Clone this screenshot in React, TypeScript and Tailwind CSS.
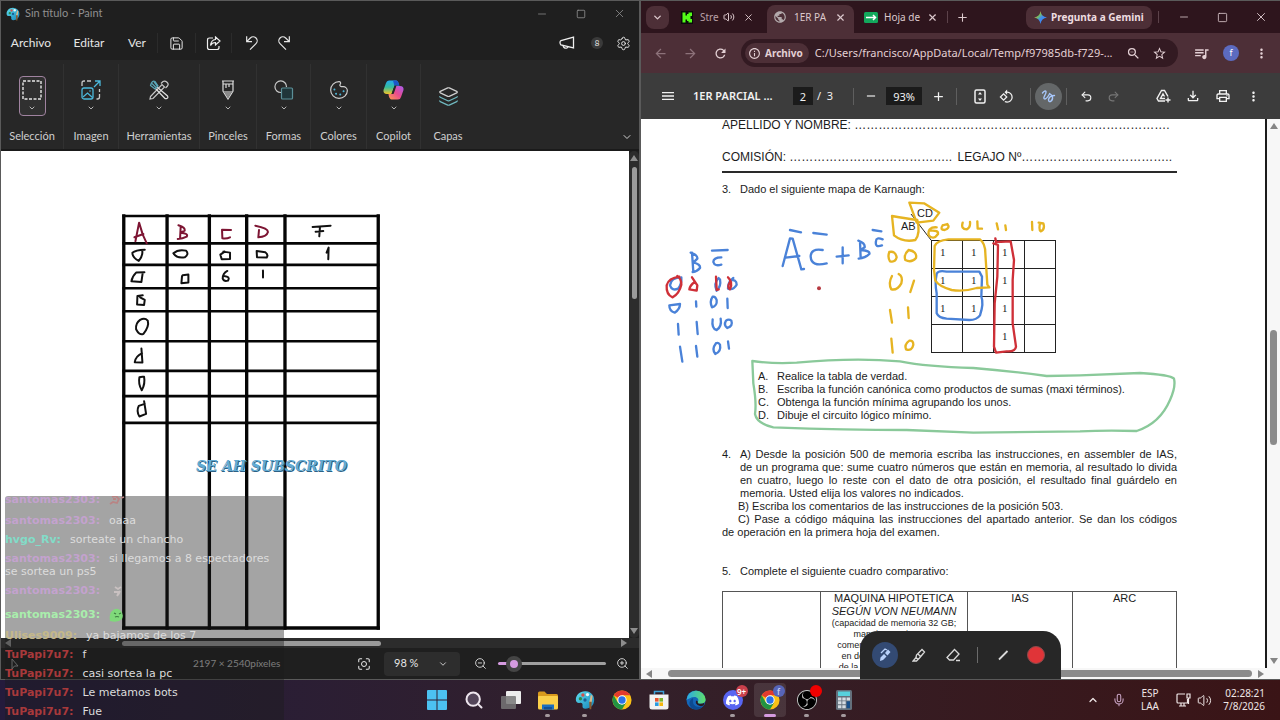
import type { ReactNode } from "react";
import {
  ChevronDown,
  ChevronUp,
  Layers,
  Maximize,
  Mic,
  Minus,
  Palette,
  Plus,
  Redo2,
  Save,
  Search,
  Settings,
  Square,
  Undo2,
  Volume2,
  X,
  ZoomIn,
  ZoomOut,
} from "lucide-react";
import {
  MdAdd,
  MdArrowBack,
  MdArrowForward,
  MdInfoOutline,
  MdMenu,
  MdMoreVert,
  MdOutlineFileDownload,
  MdOutlinePrint,
  MdOutlineRotate90DegreesCcw,
  MdPublic,
  MdQueueMusic,
  MdRefresh,
  MdRemove,
  MdStarBorder,
  MdZoomOut,
} from "react-icons/md";
import { SiDiscord, SiObsstudio } from "react-icons/si";

const UI = "font-['Noto_Sans','Open_Sans',sans-serif]";

type IconButtonProps = { label: string; className?: string; children?: ReactNode };

function IconButton({ label, className = "", children }: IconButtonProps) {
  return (
    <button aria-label={label} className={`flex shrink-0 items-center justify-center ${className}`}>
      {children}
    </button>
  );
}

/* ---------- Paint: small drawings ---------- */

function PaintLogo({ size }: { size: number }) {
  return (
    <svg width={size} height={size} viewBox="0 0 24 24" className="shrink-0" aria-hidden>
      <defs>
        <linearGradient id="paintBody" x1="0" y1="0" x2="1" y2="1">
          <stop offset="0" stopColor="#5fe0f0" />
          <stop offset="1" stopColor="#1583b8" />
        </linearGradient>
      </defs>
      <path
        d="M13 1.500C6 1 1 6 1 11.500c0 3 2 4.500 4.500 4 2.500-.5 4 .5 3.500 3-.4 2.500 1 4 3.500 4C18.500 22.500 23 18 23 12S19 2 13 1.500z"
        fill="url(#paintBody)"
      />
      <circle cx="6.500" cy="10.500" r="2" fill="#2a8a4a" />
      <circle cx="9.500" cy="6" r="2" fill="#d2504a" />
      <circle cx="15" cy="5.500" r="2" fill="#eef7f9" />
      <circle cx="12" cy="12" r="2" fill="#1d5f95" />
      <path d="M19 6l2 1-1 8h-3z" fill="#d9b98c" />
      <path d="M17 14h3l-.5 9h-2z" fill="#8a5a2c" />
    </svg>
  );
}

function SelectionIcon() {
  return (
    <svg width="20" height="20" viewBox="0 0 20 20" fill="none" stroke="#e8e8e8" strokeWidth="1.400" aria-hidden>
      <rect x="1" y="1" width="18" height="18" strokeDasharray="3 1.500" />
    </svg>
  );
}

function ImageIcon() {
  return (
    <svg width="20" height="20" viewBox="0 0 20 20" fill="none" strokeWidth="1.300" aria-hidden>
      <path d="M1 6V3q0-2 2-2h1M6 1h4M18.500 9v3M18.500 14v3q0 2-2 2h-1" stroke="#c9c9c9" />
      <path d="M13 7l6-6M14 1h5v5" stroke="#4cb9dc" />
      <rect x="1" y="8" width="11" height="11" rx="2" stroke="#4cb9dc" />
      <path d="M2 17l4.500-4 5 4.500" stroke="#4cb9dc" />
      <circle cx="9" cy="11" r=".8" fill="#4cb9dc" />
    </svg>
  );
}

function ToolsIcon() {
  return (
    <svg width="20" height="20" viewBox="0 0 20 20" fill="none" strokeWidth="1.200" aria-hidden>
      <path d="M1.500 16.500L13 4.500l2.500 2.500L4 18.500l-3 .5z" stroke="#c9c9c9" />
      <path d="M12 3.500l2-2q2-1 4 .8t.5 3.700l-2 2" stroke="#c9c9c9" />
      <path d="M8 7l10.500 9q1 2-.6 2.500-1.400.6-2.400-.5L6.500 8.500" stroke="#e0e0e0" />
      <path d="M1.500 5.500l4.500 3.500 3-3L6 1.500q-3-1.500-4.500 4zM3 3.500l4 4M5 2l3 4" stroke="#5aa6b8" />
    </svg>
  );
}

function BrushIcon() {
  return (
    <svg width="14" height="20" viewBox="0 0 14 20" fill="none" stroke="#dcdcdc" strokeWidth="1.200" aria-hidden>
      <path d="M1 1h12M2 4h10M2 1v10l5 8 5-8V1" />
      <path d="M5 4v4M8 4v3" />
      <path d="M2.500 11h9L7 18.500z" fill="#8b8b8b" stroke="none" />
    </svg>
  );
}

function ShapesIcon() {
  return (
    <svg width="20" height="20" viewBox="0 0 20 20" fill="none" strokeWidth="1.200" aria-hidden>
      <path d="M7 12.500A5.800 5.800 0 1 1 12.500 7" stroke="#c9c9c9" />
      <rect x="7.500" y="8" width="11" height="11" rx="1" fill="#20363a" stroke="#5b8f98" />
    </svg>
  );
}

function PaletteIcon() {
  return (
    <span className="relative flex">
      <Palette size={20} strokeWidth={1.4} className="-scale-x-100 rotate-180 [&_circle]:stroke-[#4cb9dc]" />
    </span>
  );
}

function LayersIcon() {
  return <Layers size={21} strokeWidth={1.4} className="[&_path:not(:first-child)]:stroke-[#6fb9c0]" />;
}

function CopilotIcon() {
  return (
    <svg width="21" height="20" viewBox="0 0 21 20" aria-hidden>
      <defs>
        <linearGradient id="copLeft" x1="0" y1="0" x2="0" y2="1">
          <stop offset="0" stopColor="#25a7ee" />
          <stop offset=".5" stopColor="#35bd9b" />
          <stop offset="1" stopColor="#f4c327" />
        </linearGradient>
        <linearGradient id="copRight" x1="1" y1="0" x2="0" y2="1">
          <stop offset="0" stopColor="#a65cf0" />
          <stop offset=".5" stopColor="#ea4b8f" />
          <stop offset="1" stopColor="#ff9a4d" />
        </linearGradient>
      </defs>
      <path d="M6 .5h7q2 0 3 4l.4 1h-3q-2 0-3 3L8.500 14H4q-4 0-3.500-4L3 3Q3.700.5 6 .5z" fill="url(#copLeft)" />
      <path d="M10 .5h3q2 0 3 4l.4 1h-3q-1.200 0-1.800 1z" fill="#1b56c8" />
      <path d="M15 19.500H8.500q-2-.3-2.800-4L5.500 14h3q1.500 0 2-2L12.500 6H17q4 0 3.500 4L18 17q-.7 2.500-3 2.500z" fill="url(#copRight)" />
      <path d="M9.500 11.500l2-6h2l-2 6-1 2.500h-2z" fill="#272727" />
    </svg>
  );
}

function HookArrow({ flip = false }: { flip?: boolean }) {
  return (
    <svg
      width="16"
      height="16"
      viewBox="0 0 24 24"
      fill="none"
      stroke="currentColor"
      strokeWidth="1.800"
      className={flip ? "-scale-x-100" : ""}
      aria-hidden
    >
      <path d="M4 2v8h8M4 10l5.500-5.500a6 6 0 0 1 8.500 8.500L9 22" />
    </svg>
  );
}

function Megaphone() {
  return (
    <svg width="16" height="14" viewBox="0 0 16 14" fill="none" stroke="#eee" strokeWidth="1.300" aria-hidden>
      <path d="M14.500 1v11L2 9q-1-1-1-2.500T2 4.500z" />
      <path d="M4 9.500q1 3.500 4 2.500.8-.4 1-1.500" />
    </svg>
  );
}

const RIBBON = [
  { label: "Selección", width: "w-[63px]", icon: <SelectionIcon />, selected: true },
  { label: "Imagen", width: "w-[55px]", icon: <ImageIcon /> },
  { label: "Herramientas", width: "w-[81px]", icon: <ToolsIcon /> },
  { label: "Pinceles", width: "w-[57px]", icon: <BrushIcon /> },
  { label: "Formas", width: "w-[54px]", icon: <ShapesIcon /> },
  { label: "Colores", width: "w-[56px]", icon: <PaletteIcon /> },
  { label: "Copilot", width: "w-[54px]", icon: <CopilotIcon /> },
  { label: "Capas", width: "w-[54px]", icon: <LayersIcon />, plain: true },
];

// grid lines and pen strokes of the truth table, three units per pixel
const TABLE_COLUMNS = [41, 171, 298, 410, 525, 805];
const TABLE_ROWS = [48, 130, 195, 265, 334, 424, 513, 589, 669];
const RED_STROKES = [
  "M76 124L87 68L98 104L110 130M73 112L100 102",
  "M205 76Q226 82 224 92L211 98Q236 100 230 110Q218 116 203 117M212 78L210 116",
  "M363 90L336 89L337 115Q350 117 360 112",
  "M436 77Q474 84 474 96Q470 110 445 112L447 90",
];
const BLACK_STROKES = [
  "M608 81L662 77M630 82L628 109M617 95L640 93",
  "M104 149Q76 150 67 158Q66 172 86 183Q100 166 96 150",
  "M190 160Q204 147 228 152Q238 163 224 172Q200 176 190 160",
  "M340 155L360 158L360 177L335 178L331 164L344 155",
  "M440 154L441 172L470 173Q476 164 466 157L440 153",
  "M650 158L656 143L655 178",
  "M103 217L78 218Q66 230 64 244L94 246L98 218",
  "M218 226L235 224L235 248L214 250L216 228",
  "M352 213Q338 220 338 236Q342 246 354 242Q362 230 342 228",
  "M459 212L459 233",
  "M98 286L82 288L81 314L102 315L104 300L90 292",
  "M90 360Q76 370 78 388Q88 408 100 402Q118 380 113 362Q104 352 90 360",
  "M94 446L97 488L74 487Q76 470 96 460",
  "M88 532Q84 552 95 571Q106 552 102 531Q94 530 88 532",
  "M102 604L108 642L88 650Q78 634 86 618L104 612",
];

function TruthTable() {
  return (
    <svg
      viewBox="0 0 870 1300"
      className="absolute left-[109px] top-[49px] h-[433px] w-[290px]"
      fill="none"
      strokeLinecap="round"
      strokeLinejoin="round"
      role="img"
      aria-label="Tabla de verdad A B C D F"
    >
      <g stroke="#050505" strokeWidth="10" strokeLinecap="square">
        {TABLE_COLUMNS.map((x) => (
          <path key={x} d={`M${x} 48V1285`} />
        ))}
        {TABLE_ROWS.map((y) => (
          <path key={y} d={`M41 ${y}H805`} strokeWidth="8" />
        ))}
        <path d="M41 1285H805" />
      </g>
      <g stroke="#7d1533" strokeWidth="6">
        {RED_STROKES.map((d) => (
          <path key={d} d={d} />
        ))}
      </g>
      <g stroke="#111" strokeWidth="6">
        {BLACK_STROKES.map((d) => (
          <path key={d} d={d} />
        ))}
      </g>
    </svg>
  );
}

function PaintWindow() {
  return (
    <section className="flex min-h-0 min-w-0 flex-col border border-[#5a5a5a] bg-[#1f1f1f] font-[Lato,'Noto_Sans',sans-serif] text-[#e6e6e6]">
      <header className="flex h-[25px] shrink-0 items-center pl-[5px] text-[#8f8f8f]">
        <PaintLogo size={14} />
        <h1 className="ml-[5px] mr-auto text-[11px]">Sin título - Paint</h1>
        <IconButton label="Minimizar" className="w-[39px]">
          <Minus size={12} strokeWidth={1.5} />
        </IconButton>
        <IconButton label="Maximizar" className="w-[39px]">
          <Square size={10} strokeWidth={2} />
        </IconButton>
        <IconButton label="Cerrar" className="w-[39px]">
          <X size={13} strokeWidth={1.5} />
        </IconButton>
      </header>

      <nav className="flex h-[34px] shrink-0 items-center text-xs">
        <button className="w-15">Archivo</button>
        <button className="w-14">Editar</button>
        <button className="w-10">Ver</button>
        <IconButton label="Guardar" className="h-5 w-[39px] border-x border-[#2b2b2b]">
          <Save size={15} strokeWidth={1.6} />
        </IconButton>
        <IconButton label="Compartir" className="h-5 w-9 border-r border-[#2b2b2b]">
          <svg width="15" height="15" viewBox="0 0 15 15" fill="none" stroke="#eee" strokeWidth="1.200" aria-hidden>
            <path d="M7 2H3.500Q1.500 2 1.500 4v7.500q0 2 2 2H11q2 0 2-2V10" />
            <path d="M9.500 1l4.500 4-4.500 4V6.500Q6 6.500 4.500 9.500 5 4 9.500 3.500z" />
          </svg>
        </IconButton>
        <IconButton label="Deshacer" className="w-10">
          <HookArrow />
        </IconButton>
        <IconButton label="Rehacer" className="w-6">
          <HookArrow flip />
        </IconButton>
        <IconButton label="Comentarios" className="ml-auto w-8">
          <Megaphone />
        </IconButton>
        <IconButton label="Cuenta" className="w-7">
          <span className="flex h-3 w-3 items-center justify-center rounded-full bg-[#3a3a3a] text-[8px]">8</span>
        </IconButton>
        <IconButton label="Configuración" className="mr-1 w-6">
          <Settings size={15} strokeWidth={1.6} />
        </IconButton>
      </nav>

      <div className="flex h-[91px] shrink-0 border-b-2 border-[#1a1a1a] bg-[#272727] pt-1 text-[11px] text-[#cfcfcf]">
        {RIBBON.map(({ label, width, icon, selected, plain }) => (
          <button
            key={label}
            className={`${width} flex shrink-0 flex-col items-center ${plain ? "" : "border-r border-[#313131]"}`}
          >
            <span
              className={`mt-3 flex h-10 w-[27px] flex-col items-center justify-center gap-1 rounded ${
                selected ? "border border-[#a083a0] bg-[#303030]" : ""
              }`}
            >
              {icon}
              {!plain && <ChevronDown size={8} strokeWidth={2.5} className="shrink-0" />}
            </span>
            <span className="mt-auto pb-[5px]">{label}</span>
          </button>
        ))}
        <IconButton label="Más opciones" className="ml-auto w-6 items-end pb-[6px]">
          <ChevronDown size={12} />
        </IconButton>
      </div>

      <div className="flex min-h-0 flex-1">
        <div className="relative min-w-0 flex-1 overflow-hidden bg-white">
          <TruthTable />
          <p
            className="absolute left-[195px] top-[305px] whitespace-nowrap font-['DejaVu_Serif',serif] text-sm font-bold italic text-[#62abd3]"
            style={{ textShadow: "1px 1px 0 #2c6185" }}
          >
            SE AH SUBSCRITO
          </p>
        </div>
        <div className="flex w-[10px] flex-col items-center rounded-full bg-[#2c2c2c] py-1">
          <span className="h-0 w-0 border-x-4 border-b-6 border-x-transparent border-b-[#8e8e8e]" />
          <span className="mt-[6px] h-[132px] w-[5px] rounded-full bg-[#9a9a9a]" />
          <span className="mt-auto h-0 w-0 border-x-4 border-t-6 border-x-transparent border-t-[#8e8e8e]" />
        </div>
      </div>
      <div className="flex h-[10px] shrink-0 items-center bg-[#2c2c2c] px-1">
        <span className="h-0 w-0 border-y-4 border-r-6 border-y-transparent border-r-[#8e8e8e]" />
        <span className="ml-[111px] h-[5px] w-[259px] rounded-full bg-[#9a9a9a]" />
        <span className="ml-auto mr-2 h-0 w-0 border-y-4 border-l-6 border-y-transparent border-l-[#8e8e8e]" />
      </div>

      <footer className="flex h-[31px] shrink-0 items-center text-[11px]">
        <svg width="24" height="14" viewBox="0 0 24 14" fill="none" stroke="#999" className="shrink-0" aria-hidden>
          <path d="M11 2v10l2.500-3H17z" />
        </svg>
        <span className="ml-[168px] w-[86px] whitespace-nowrap text-[10px] text-[#bdbdbd]">2197 × 2540píxeles</span>
        <IconButton label="Ajustar a la ventana" className="ml-[77px] w-4">
          <span className="relative flex items-center justify-center">
            <Maximize size={14} strokeWidth={1.8} />
            <span className="absolute h-[6px] w-[6px] rounded-full border border-[#e6e6e6]" />
          </span>
        </IconButton>
        <span className="relative ml-3 flex items-center">
          <select
            aria-label="Nivel de zoom"
            className="h-6 w-19 appearance-none rounded bg-[#2d2d2d] pl-[10px] text-[11px] text-[#e6e6e6]"
          >
            <option>98 %</option>
          </select>
          <ChevronDown size={10} className="pointer-events-none absolute right-3" />
        </span>
        <IconButton label="Alejar" className="ml-3 w-4">
          <ZoomOut size={13} strokeWidth={1.6} />
        </IconButton>
        <input
          type="range"
          aria-label="Zoom"
          min={0}
          max={100}
          defaultValue={9}
          className="ml-[10px] h-[3px] w-[108px] appearance-none rounded-full bg-linear-to-r from-[#d59be0] from-10% to-[#a0a0a0] to-10% [&::-webkit-slider-thumb]:h-4 [&::-webkit-slider-thumb]:w-4 [&::-webkit-slider-thumb]:appearance-none [&::-webkit-slider-thumb]:rounded-full [&::-webkit-slider-thumb]:border-4 [&::-webkit-slider-thumb]:border-[#454545] [&::-webkit-slider-thumb]:bg-[#d59be0]"
        />
        <IconButton label="Acercar" className="ml-2 w-4">
          <ZoomIn size={13} strokeWidth={1.6} />
        </IconButton>
      </footer>
    </section>
  );
}

/* ---------- Chat overlay ---------- */

type Message = { user: string; color: string; text?: string; more?: string; emote?: string; gap: string };

const CHAT: Message[] = [
  { user: "santomas2303:", color: "text-[#c3a2ce]", emote: "pink", gap: "-mt-[3px]" },
  { user: "santomas2303:", color: "text-[#c3a2ce]", text: "oaaa", gap: "mt-2" },
  { user: "hvgo_Rv:", color: "text-[#82dcc8]", text: "sorteate un chancho", gap: "mt-[6px]" },
  {
    user: "santomas2303:",
    color: "text-[#c3a2ce]",
    text: "si llegamos a 8 espectadores",
    more: "se sortea un ps5",
    gap: "mt-[6px]",
  },
  { user: "santomas2303:", color: "text-[#c3a2ce]", emote: "grey", gap: "mt-[6px]" },
  { user: "santomas2303:", color: "text-[#a9eeac]", emote: "green", gap: "mt-[11px]" },
  { user: "Ulises9009:", color: "text-[#c4b88a]", text: "ya bajamos de los 7", gap: "mt-2" },
  { user: "TuPapi7u7:", color: "text-[#a8393b]", text: "f", gap: "mt-[6px]" },
  { user: "TuPapi7u7:", color: "text-[#a8393b]", text: "casi sortea la pc", gap: "mt-[6px]" },
  { user: "TuPapi7u7:", color: "text-[#a8393b]", text: "Le metamos bots", gap: "mt-[6px]" },
  { user: "TuPapi7u7:", color: "text-[#a8393b]", text: "Fue", gap: "mt-[6px]" },
];

function Emote({ kind }: { kind: string }) {
  if (kind === "green") {
    return (
      <svg width="14" height="14" viewBox="0 0 14 14" aria-hidden>
        <path d="M2 4Q7-2 12 3q3 4 1 8-4 4-12 2Q0 8 2 4z" fill="#7fd97a" />
        <path d="M5 5l2 1M12 5l-2 1M6 9q2-1 4 0" stroke="#3d7b40" strokeWidth="1.200" fill="none" />
      </svg>
    );
  }
  return (
    <svg width="16" height="13" viewBox="0 0 16 13" aria-hidden>
      <path
        d={kind === "pink" ? "M1 11l3-2 4 1 2-4-3-3-4 1M4 6h3M12 5l3-1" : "M6 3l3 2 3-2M5 8h5l-2 4M11 7l-2 4"}
        stroke={kind === "pink" ? "#b98484" : "#c9c1c1"}
        strokeWidth="1.800"
        fill="none"
      />
    </svg>
  );
}

function ChatOverlay() {
  return (
    <aside className="pointer-events-none absolute bottom-0 left-[5px] z-20 h-56 w-[279px] overflow-hidden rounded-t-[3px] bg-[#1c1c1c]/40 font-['DejaVu_Sans',sans-serif] text-[11px] leading-[13px] text-[#dcdcdc]">
      {CHAT.map(({ user, color, text, more, emote, gap }, i) => (
        <div key={i} className={`${gap} whitespace-nowrap`}>
          <div className="flex h-[13px] items-center gap-[9px]">
            <b className={color}>{user}</b>
            {text}
            {emote && <Emote kind={emote} />}
          </div>
          {more && <p>{more}</p>}
        </div>
      ))}
    </aside>
  );
}

/* ---------- Browser ---------- */

function KickIcon() {
  return (
    <svg width="12" height="13" viewBox="0 0 12 13" className="shrink-0" aria-hidden>
      <rect width="12" height="13" fill="#0b0b0b" />
      <path d="M1.500 1.500h3v3h1.500v-1.500h1.500v-1.500h3.500v3.500H9.500v3H11v3.500H7.500V10H6V8.500H4.500v3h-3z" fill="#53fc18" />
    </svg>
  );
}

function SheetIcon() {
  return (
    <svg width="14" height="11" viewBox="0 0 14 11" className="shrink-0" aria-hidden>
      <rect width="14" height="11" rx="1.500" fill="#12a85c" />
      <path d="M2 5.500h10M9 3l2.500 2.500L9 8" stroke="#fff" strokeWidth="1.500" fill="none" />
    </svg>
  );
}

function GeminiSpark() {
  return (
    <svg width="13" height="13" viewBox="0 0 24 24" aria-hidden>
      <defs>
        <linearGradient id="gem" x1="0" y1="0" x2="1" y2="1">
          <stop offset=".2" stopColor="#e8564a" />
          <stop offset=".35" stopColor="#7ac05a" />
          <stop offset=".55" stopColor="#3f8cf0" />
          <stop offset="1" stopColor="#3f7bf0" />
        </linearGradient>
      </defs>
      <path d="M12 0q1.500 10.500 12 12-10.500 1.500-12 12Q10.500 13.500 0 12 10.500 10.500 12 0z" fill="url(#gem)" />
    </svg>
  );
}

function SquiggleIcon() {
  return (
    <svg
      width="15"
      height="15"
      viewBox="0 0 15 15"
      fill="none"
      stroke="currentColor"
      strokeWidth="1.400"
      strokeLinecap="round"
      aria-hidden
    >
      <path d="M1.500 4Q4 1 5 2.500 5.500 4 3.500 7 2 10 4 10 5.500 10 8.500 5M13.500 6.500Q8.500 6.500 7.500 10.500 7.500 13 9.500 12.500 12 11 11.500 8 11 6 8.500 4.500" />
    </svg>
  );
}

function TabStrip() {
  return (
    <div className="flex h-8 shrink-0 items-center bg-[#2e151d] pl-[5px] text-[10px] text-[#dcc9cd]">
      <IconButton label="Buscar pestañas" className="h-[23px] w-[23px] rounded-lg bg-[#4d2f37]">
        <ChevronDown size={11} strokeWidth={3} />
      </IconButton>
      <div className="flex w-[98px] items-center pl-3">
        <KickIcon />
        <span className="ml-[7px] w-[19px] whitespace-nowrap text-[#b9a1a7]">Stre</span>
        <Volume2 size={12} className="ml-1 shrink-0" />
        <IconButton label="Cerrar pestaña" className="ml-[7px] w-3">
          <X size={11} />
        </IconButton>
      </div>
      <div className="flex h-[28px] w-[87px] items-center self-end rounded-t-lg bg-[#4d2f37] pb-1 pl-[6px]">
        <MdPublic size={14} className="shrink-0 text-[#b3aaac]" />
        <span className="ml-[7px] w-8 whitespace-nowrap">1ER PA</span>
        <IconButton label="Cerrar pestaña" className="ml-[6px] w-4">
          <X size={11} strokeWidth={2.5} />
        </IconButton>
      </div>
      <div className="flex items-center pl-[10px]">
        <SheetIcon />
        <span className="ml-[6px] w-9 whitespace-nowrap">Hoja de</span>
        <IconButton label="Cerrar pestaña" className="ml-[6px] w-3">
          <X size={11} strokeWidth={2.5} />
        </IconButton>
      </div>
      <span className="ml-[9px] h-3 w-px bg-[#5c424a]" />
      <IconButton label="Nueva pestaña" className="ml-[6px] w-4">
        <Plus size={13} />
      </IconButton>
      <button className="ml-auto flex h-[23px] w-[126px] items-center gap-1 whitespace-nowrap rounded-lg bg-[#4d2f37] pl-2 font-bold text-[#eedde0]">
        <GeminiSpark />
        Pregunta a Gemini
      </button>
      <span className="ml-[6px] h-3 w-px bg-[#5c424a]" />
      <IconButton label="Minimizar" className="ml-[6px] w-[38px]">
        <Minus size={12} strokeWidth={1.6} />
      </IconButton>
      <IconButton label="Maximizar" className="w-[38px]">
        <Square size={11} strokeWidth={1.8} />
      </IconButton>
      <IconButton label="Cerrar" className="w-[39px]">
        <X size={14} strokeWidth={1.6} />
      </IconButton>
    </div>
  );
}

function AddressBar() {
  return (
    <div className="flex h-10 shrink-0 items-center bg-[#4d2f37] text-[#e3d0d4]">
      <IconButton label="Atrás" className="ml-1 w-[30px] text-[#8d727a]">
        <MdArrowBack size={15} />
      </IconButton>
      <IconButton label="Adelante" className="w-[30px] text-[#8d727a]">
        <MdArrowForward size={15} />
      </IconButton>
      <IconButton label="Volver a cargar" className="w-[30px]">
        <MdRefresh size={15} />
      </IconButton>
      <div className="ml-[6px] flex h-7 min-w-0 flex-1 items-center rounded-full bg-[#331a22] pl-1 pr-[6px]">
        <button className="flex h-5 shrink-0 items-center gap-1 rounded-full bg-[#4d2f37] pl-[3px] pr-[6px] text-[10px] font-bold">
          <MdInfoOutline size={13} />
          Archivo
        </button>
        <input
          aria-label="Dirección"
          readOnly
          defaultValue="C:/Users/francisco/AppData/Local/Temp/f97985db-f729-..."
          className="ml-[6px] min-w-0 flex-1 bg-transparent text-[11px] outline-none"
        />
        <IconButton label="Zoom" className="w-[26px]">
          <MdZoomOut size={15} />
        </IconButton>
        <IconButton label="Favorito" className="w-[26px]">
          <MdStarBorder size={15} />
        </IconButton>
      </div>
      <IconButton label="Medios" className="ml-2 w-[30px]">
        <MdQueueMusic size={17} />
      </IconButton>
      <IconButton label="Perfil" className="w-[30px]">
        <span className="flex h-4 w-4 items-center justify-center rounded-full bg-[#5c6bc0] text-[9px] text-white">f</span>
      </IconButton>
      <IconButton label="Menú" className="mr-1 w-[30px]">
        <MdMoreVert size={15} />
      </IconButton>
    </div>
  );
}

function Divider() {
  return <span className="h-[17px] w-px shrink-0 bg-[#5f5f5f]" />;
}

function PdfToolbar() {
  return (
    <div className="flex h-[46px] shrink-0 items-center bg-[#3c3c3c] text-[11px] text-[#f1f1f1]">
      <IconButton label="Menú" className="ml-3 w-[30px]">
        <MdMenu size={16} />
      </IconButton>
      <h2 className="ml-[10px] w-[92px] whitespace-nowrap font-semibold">1ER PARCIAL ...</h2>
      <input aria-label="Página" defaultValue="2" className="ml-2 h-[18px] w-5 bg-[#1b1b1b] text-center" />
      <span className="ml-1 w-9 whitespace-pre">/  3</span>
      <Divider />
      <IconButton label="Alejar" className="ml-[2px] w-[30px]">
        <MdRemove size={14} />
      </IconButton>
      <input aria-label="Zoom" defaultValue="93%" className="h-[18px] w-9 bg-[#1b1b1b] text-center" />
      <IconButton label="Acercar" className="mr-[2px] w-8">
        <MdAdd size={15} />
      </IconButton>
      <Divider />
      <IconButton label="Ajustar a la página" className="ml-[10px] w-[26px]">
        <svg width="12" height="15" viewBox="0 0 12 15" fill="none" stroke="currentColor" aria-hidden>
          <rect x="1" y="1" width="10" height="13" rx="1.500" strokeWidth="1.500" />
          <path d="M6 3l2 2.500H4zM6 12l2-2.500H4z" fill="currentColor" stroke="none" />
        </svg>
      </IconButton>
      <IconButton label="Girar" className="mr-[11px] w-[26px]">
        <MdOutlineRotate90DegreesCcw size={15} />
      </IconButton>
      <Divider />
      <IconButton label="Dibujar" className="mx-1 h-[27px] w-[27px] rounded-full bg-[#646768] text-[#a8c7fa]">
        <SquiggleIcon />
      </IconButton>
      <Divider />
      <IconButton label="Deshacer" className="ml-[6px] w-[27px]">
        <Undo2 size={13} />
      </IconButton>
      <IconButton label="Rehacer" className="w-[27px] text-[#757575]">
        <Redo2 size={13} />
      </IconButton>
      <IconButton label="Guardar en Drive" className="ml-auto w-[30px]">
        <svg width="15" height="14" viewBox="0 0 15 14" fill="none" stroke="currentColor" strokeWidth="1.400" aria-hidden>
          <path d="M9 12H2.500L1 9.500 5.500 1.500h3l3.500 6" />
          <path d="M9 9.500H4.500L7 5l1.500 2.500M12 8.500v5M9.500 11h5" />
        </svg>
      </IconButton>
      <IconButton label="Descargar" className="w-[30px]">
        <MdOutlineFileDownload size={16} />
      </IconButton>
      <IconButton label="Imprimir" className="w-[30px]">
        <MdOutlinePrint size={16} />
      </IconButton>
      <IconButton label="Más" className="mr-3 w-[30px]">
        <MdMoreVert size={15} />
      </IconButton>
    </div>
  );
}

// pen strokes over the exam page, three units per pixel
const INK = [
  {
    color: "#4a82d8",
    width: 7,
    paths: [
      "M428 288L450 205L458 206L484 298L492 297M437 263L478 258M450 180L483 187",
      "M548 240Q512 234 512 260Q514 292 560 280M520 189L560 194",
      "M608 232L608 280M590 260L626 256",
      "M655 212Q676 220 674 232L662 240Q692 242 688 252Q676 264 656 266M660 214L662 264M698 180L724 184M728 208Q708 200 708 214Q704 234 726 226",
      "M156 248L160 306M152 248Q174 256 172 266L160 278Q182 282 180 294Q172 304 158 306",
      "M216 242L263 240M244 262Q220 262 220 276Q224 290 244 284",
      "M124 322Q92 322 90 346Q96 364 114 356Q126 342 124 322",
      "M88 406L120 402Q120 418 104 428Q88 424 88 406M168 394L169 410M218 380Q208 394 216 412Q232 408 230 390Q226 378 218 380M262 386L263 414",
      "M114 462L116 494M170 456L173 492M218 448Q214 476 230 480Q246 470 242 446M258 452Q250 466 262 474Q280 468 274 452Q266 446 258 452",
      "M120 530L127 575M168 528L172 560M228 520Q214 538 226 552Q244 544 240 524Q234 516 228 520M264 514L267 536",
      "M280 324Q262 338 264 356Q280 362 290 344Q290 326 270 332M236 324Q220 340 230 362Q244 350 240 328",
      "M890 312Q894 300 920 305L1018 305L1026 320L1024 380Q1032 400 1020 436Q1010 450 988 450L920 446Q896 444 890 430L890 370Q884 340 890 312",
    ],
  },
  {
    color: "#e6b422",
    width: 7,
    paths: [
      "M808 98L852 100L898 128L880 152L830 158Z",
      "M756 138L762 196Q790 218 826 210Q842 190 832 150Q800 146 756 138",
      "M890 172Q862 170 866 196Q880 212 894 192Q896 180 872 182M908 166Q898 180 914 180Q932 174 922 162L908 166",
      "M968 158Q962 178 980 178Q992 172 990 156M1012 154L1013 176L1026 176M1070 160L1074 178M1096 166L1098 180M1176 156L1177 180M1200 160Q1196 180 1202 184Q1216 178 1210 160L1196 158",
      "M748 246Q742 262 750 274Q766 278 770 262Q766 242 748 246M806 240Q790 254 796 270Q814 280 828 264Q832 244 806 240",
      "M756 318Q744 340 754 358Q772 362 784 340Q790 320 776 312M822 332L811 366",
      "M750 420L756 458M804 412L806 444M754 506L758 548M808 512Q792 524 798 538Q816 544 820 524Q820 510 808 512",
      "M882 300L884 228Q890 212 925 208L1020 208Q1036 220 1036 250L1042 344L1048 352L1010 354Q970 366 935 360Q898 350 886 332Z",
    ],
  },
  {
    color: "#cf3038",
    width: 7,
    paths: [
      "M1066 205L1068 216L1112 214L1122 270L1118 330L1118 460L1128 530Q1126 546 1100 544L1068 548L1062 530L1064 400L1072 320L1074 225L1060 220",
      "M118 320Q86 324 80 346Q78 374 98 382Q118 370 124 344Q124 326 112 318",
      "M156 322L172 346L170 362L148 358Q150 346 164 336M228 320L230 360L236 358M264 322Q280 336 270 358Q260 352 270 336",
    ],
  },
  {
    color: "#8ac99a",
    width: 7,
    paths: [
      "M337 573Q400 582 470 578Q640 562 780 574Q860 590 1000 594Q1100 602 1220 618L1320 616L1500 609Q1590 614 1602 626Q1608 650 1590 690Q1560 760 1490 783Q1400 780 1320 784L1000 788L800 780Q620 780 400 772Q350 760 345 732Q350 700 340 640Z",
    ],
  },
];

function PageInk() {
  return (
    <svg
      viewBox="0 0 1680 810"
      className="pointer-events-none absolute -left-px top-[51px] h-[270px] w-[560px]"
      fill="none"
      strokeLinecap="round"
      strokeLinejoin="round"
      aria-hidden
    >
      {INK.map(({ color, width, paths }) => (
        <g key={color} stroke={color} strokeWidth={width}>
          {paths.map((d) => (
            <path key={d} d={d} />
          ))}
        </g>
      ))}
      <circle cx="537" cy="355" r="6" fill="#b73a42" />
    </svg>
  );
}

const KARNAUGH = [
  ["1", "1", "1", ""],
  ["1", "1", "1", ""],
  ["1", "1", "1", ""],
  ["", "", "1", ""],
];

const TASKS = [
  "Realice la tabla de verdad.",
  "Escriba la función canónica como productos de sumas (maxi términos).",
  "Obtenga la función mínima agrupando los unos.",
  "Dibuje el circuito lógico mínimo.",
];

function Justified({ children }: { children: ReactNode }) {
  return <span className="block whitespace-nowrap [text-align-last:justify]">{children}</span>;
}

function ExamPage() {
  return (
    <div className="relative min-w-0 flex-1 overflow-hidden border-r-2 border-[#1b1b1b] bg-white pl-[81px] font-['Liberation_Sans',Arial,sans-serif] text-[11px] leading-[13px] text-[#1c1c1c]">
      <div className="w-[455px]">
        <p className="whitespace-nowrap text-xs leading-[13px]">APELLIDO Y NOMBRE: {"…".repeat(26)}.</p>
        <p className="mt-[18px] flex justify-between whitespace-nowrap border-b-2 border-[#2a2a2a] pb-[7px] text-xs leading-[14px]">
          <span>COMISIÓN: {"…".repeat(13)}..</span>
          <span className="pr-[5px]">LEGAJO Nº{"…".repeat(12)}..</span>
        </p>

        <p className="mt-[10px] flex">
          <span className="w-[18px]">3.</span>Dado el siguiente mapa de Karnaugh:
        </p>

        <div className="relative mt-[44px] pl-[209px]">
          <span className="absolute -top-[33px] left-[195px]">CD</span>
          <span className="absolute -top-[20px] left-[179px]">AB</span>
          <svg width="22" height="28" viewBox="0 0 22 28" className="absolute -top-[28px] left-[188px]" aria-hidden>
            <path d="M1 2L21 28" stroke="#222" />
          </svg>
          <table className="border-collapse font-['Liberation_Serif',serif]">
            <tbody>
              {KARNAUGH.map((row, r) => (
                <tr key={r} className="h-[28px]">
                  {row.map((cell, c) => (
                    <td key={c} className="w-[31px] border border-[#222] pb-1 pl-2 align-middle">
                      {cell}
                    </td>
                  ))}
                </tr>
              ))}
            </tbody>
          </table>
        </div>

        <ol className="ml-9 mt-[17px]">
          {TASKS.map((task, i) => (
            <li key={task} className="flex whitespace-nowrap">
              <span className="w-[19px]">{"ABCD"[i]}.</span>
              {task}
            </li>
          ))}
        </ol>

        <div className="mt-[26px] flex">
          <span className="w-[18px] shrink-0">4.</span>
          <p className="flex-1">
            <Justified>A) Desde la posición 500 de memoria escriba las instrucciones, en assembler de IAS,</Justified>
            <Justified>de un programa que: sume cuatro números que están en memoria, al resultado lo divida</Justified>
            <Justified>en cuatro, luego lo reste con el dato de otra posición, el resultado final guárdelo en</Justified>
            memoria. Usted elija los valores no indicados.
          </p>
        </div>
        <p className="pl-4">B) Escriba los comentarios de las instrucciones de la posición 503.</p>
        <p>
          <span className="block pl-4">
            <Justified>C) Pase a código máquina las instrucciones del apartado anterior. Se dan los códigos</Justified>
          </span>
          de operación en la primera hoja del examen.
        </p>
        <p className="mt-[26px] flex">
          <span className="w-[18px]">5.</span>Complete el siguiente cuadro comparativo:
        </p>
        <table className="mt-[13px] w-full table-fixed border-collapse text-center">
          <colgroup>
            <col className="w-[98px]" />
            <col className="w-[147px]" />
            <col className="w-[105px]" />
            <col />
          </colgroup>
          <tbody>
            <tr className="h-[120px] align-top">
              <td className="border border-[#555]" />
              <td className="whitespace-nowrap border border-[#555]">
                MAQUINA HIPOTETICA
                <i className="block">SEGÚN VON NEUMANN</i>
                <span className="block text-[9px] leading-[11px]">
                  (capacidad de memoria 32 GB;
                  <br />
                  maneja 8 registros y
                  <br />
                  comenzando las direcciones
                  <br />
                  en decimal, con el tamaño
                  <br />
                  de la palabra de 32 bits fijo)
                </span>
              </td>
              <td className="border border-[#555]">IAS</td>
              <td className="border border-[#555]">ARC</td>
            </tr>
          </tbody>
        </table>
      </div>
      <PageInk />
    </div>
  );
}

function InkToolbar() {
  return (
    <div className="absolute bottom-0 left-[219px] flex h-12 w-[201px] items-center rounded-t-[18px] bg-[#272727] pl-3 text-[#dadada]">
      <IconButton label="Bolígrafo" className="h-[26px] w-[26px] rounded-full bg-[#334a73] text-[#b9d2fb]">
        <svg width="14" height="14" viewBox="0 0 14 14" aria-hidden>
          <path d="M2 13l.5-3.500L6 6l2.500 2.500L5 12zM7 5l3-3.500 2.500 2.500L9.500 7.500z" fill="currentColor" />
          <path d="M3 5l4-4 2 1" fill="none" stroke="currentColor" strokeWidth="1.300" />
        </svg>
      </IconButton>
      <IconButton label="Resaltador" className="ml-2 w-[26px]">
        <svg width="14" height="14" viewBox="0 0 14 14" fill="none" stroke="currentColor" strokeWidth="1.300" aria-hidden>
          <path d="M1 13h3.500L6 11.500 4 9.500zM4 9.500L4.500 7 10 1.500 12.500 4 7.500 10 6 11.500M6 6l2.500 2.500" />
        </svg>
      </IconButton>
      <IconButton label="Borrador" className="ml-2 w-[26px]">
        <svg width="14" height="14" viewBox="0 0 14 14" fill="none" stroke="currentColor" strokeWidth="1.300" aria-hidden>
          <path d="M3.500 12L1 9.500 8.500 1.500 13 6 7.500 12zM10 12.500h4" />
        </svg>
      </IconButton>
      <span className="ml-[11px] h-4 w-px bg-[#6b6b6b]" />
      <IconButton label="Grosor" className="ml-3 w-[26px]">
        <svg width="12" height="12" viewBox="0 0 12 12" stroke="currentColor" strokeWidth="1.800" aria-hidden>
          <path d="M2 10.500L10.500 2" />
        </svg>
      </IconButton>
      <IconButton
        label="Color rojo"
        className="ml-[11px] h-[18px] w-[18px] rounded-full border border-[#8b4a4c] bg-[#e03438]"
      />
    </div>
  );
}

function BrowserWindow() {
  return (
    <section
      className={`${UI} relative flex min-h-0 min-w-0 flex-col border-b border-l border-t border-[#5a5a5a] bg-[#4d2f37]`}
    >
      <TabStrip />
      <AddressBar />
      <PdfToolbar />
      <div className="flex min-h-0 flex-1 bg-[#f7f7f7]">
        <ExamPage />
        <div className="flex w-[13px] flex-col items-center py-1">
          <span className="h-0 w-0 border-x-4 border-b-6 border-x-transparent border-b-[#858585]" />
          <span className="mt-[201px] h-[115px] w-[7px] rounded-full bg-[#8b8b8b]" />
          <span className="mt-auto h-0 w-0 border-x-4 border-t-6 border-x-transparent border-t-[#858585]" />
        </div>
      </div>
      <div className="flex h-[11px] shrink-0 items-center bg-[#f7f7f7] pl-[5px] pr-4">
        <span className="h-0 w-0 border-y-4 border-r-6 border-y-transparent border-r-[#858585]" />
        <span className="ml-4 mr-[6px] h-[7px] flex-1 rounded-full bg-[#8b8b8b]" />
        <span className="h-0 w-0 border-y-4 border-l-6 border-y-transparent border-l-[#858585]" />
      </div>
      <InkToolbar />
    </section>
  );
}

/* ---------- Taskbar ---------- */

function ChromeLogo() {
  return (
    <svg width="20" height="20" viewBox="0 0 24 24" aria-hidden>
      <circle cx="12" cy="12" r="11.500" fill="#fbc116" />
      <path d="M12 12L2 6.300A11.500 11.500 0 0 1 22 6.300H12z" fill="#e33b2e" />
      <path d="M2 6.300A11.500 11.500 0 0 0 12 23.500l5-8.600L7 14.900z" fill="#229342" />
      <circle cx="12" cy="12" r="5.600" fill="#fff" />
      <circle cx="12" cy="12" r="4.400" fill="#2b72e8" />
    </svg>
  );
}

function EdgeLogo() {
  return (
    <svg width="20" height="20" viewBox="0 0 24 24" aria-hidden>
      <defs>
        <linearGradient id="edgeTop" x1="0" y1="0" x2="1" y2="0">
          <stop offset="0" stopColor="#2ba8e8" />
          <stop offset="1" stopColor="#5fdf6a" />
        </linearGradient>
      </defs>
      <circle cx="12" cy="12" r="11.500" fill="#1466b8" />
      <path d="M.6 12A11.500 11.500 0 0 1 23.500 11c.2 4-3 5.500-6 5.500-3.500 0-4-1.500-3-3 1-2-.5-5-4.500-5S3 11 .6 12z" fill="url(#edgeTop)" />
      <path d="M8.500 13c-1 6 6 9.500 12.500 6-3 4-8 5.500-13 3.500C3.500 20 2 13 8.500 9.500z" fill="#0c4a91" />
      <path d="M14.200 13.700q-1 2.500 3 2.900 3.500 0 5-1.600-.5 3-1.800 4-6 1.500-8.500-3-.5-2 .6-3.500z" fill="#271a22" />
    </svg>
  );
}

function StartLogo() {
  return (
    <svg width="20" height="20" viewBox="0 0 20 20" fill="#4cc2f1" aria-hidden>
      <path d="M0 1q0-1 1-1h8.500v9.500H0zM10.500 0H19q1 0 1 1v8.500h-9.500zM0 10.500h9.500V20H1q-1 0-1-1zM10.500 10.500H20V19q0 1-1 1h-8.500z" />
    </svg>
  );
}

function FolderLogo() {
  return (
    <svg width="22" height="19" viewBox="0 0 22 19" aria-hidden>
      <path d="M1 2q0-1.500 1.500-1.500h5L10 3h9.500Q21 3 21 4.500V10H1z" fill="#d99a1d" />
      <path d="M1 6q0-1 1-1h18q1 0 1 1v11q0 1.500-1.500 1.500h-17Q1 18.500 1 17z" fill="#fbd04a" />
      <path d="M5 13.500h12v5H5z" fill="#1b6fc0" />
      <path d="M7 16h8v2.500H7z" fill="#124f93" />
    </svg>
  );
}

function StoreLogo() {
  return (
    <svg width="20" height="20" viewBox="0 0 20 20" aria-hidden>
      <path d="M5.500 4.500v-3h9v3" fill="none" stroke="#3aa0d8" strokeWidth="1.500" />
      <path d="M.5 4.500h19V17q0 2.500-2.500 2.500H3Q.5 19.500.5 17z" fill="#f2f2f2" />
      <path d="M6 8h3.600v3.600H6z" fill="#e8542f" />
      <path d="M10.400 8H14v3.600h-3.600z" fill="#7ab42c" />
      <path d="M6 12.400h3.600V16H6z" fill="#2a9be0" />
      <path d="M10.400 12.400H14V16h-3.600z" fill="#f5b70f" />
    </svg>
  );
}

function CalculatorLogo() {
  return (
    <svg width="16" height="20" viewBox="0 0 16 20" aria-hidden>
      <rect width="16" height="20" rx="1.500" fill="#64707c" />
      <rect x="2" y="1.500" width="12" height="4.500" fill="#57d1dc" />
      <path
        d="M2 7.500h3.400v3H2zM6.300 7.500h3.400v3H6.300zM10.600 7.500H14v3h-3.400zM2 11.300h3.400v3H2zM6.300 11.300h3.400v3H6.300zM2 15.200h3.400v3H2zM6.300 15.200h3.400v3H6.300z"
        fill="#d4dbe2"
      />
      <path d="M10.600 11.300H14v6.900h-3.400z" fill="#174f8a" />
    </svg>
  );
}

type TaskbarApp = { name: string; icon: ReactNode; open?: boolean; active?: boolean; badge?: ReactNode };

const APPS: TaskbarApp[] = [
  { name: "Inicio", icon: <StartLogo /> },
  { name: "Buscar", icon: <Search size={20} strokeWidth={2.4} fill="#54465a" color="#eee6ee" /> },
  {
    name: "Vista de tareas",
    icon: (
      <svg width="20" height="19" viewBox="0 0 20 19" aria-hidden>
        <rect x="5" y="0" width="15" height="13" rx="1" fill="#ededed" />
        <rect x="0" y="5" width="15" height="13" rx="1" fill="#777" opacity=".85" />
      </svg>
    ),
  },
  { name: "Explorador", icon: <FolderLogo />, open: true },
  { name: "Paint", icon: <PaintLogo size={20} />, open: true },
  { name: "Chrome", icon: <ChromeLogo /> },
  { name: "Store", icon: <StoreLogo /> },
  { name: "Edge", icon: <EdgeLogo /> },
  {
    name: "Discord",
    open: true,
    icon: (
      <span className="flex h-5 w-5 items-center justify-center rounded-full bg-[#5865f2]">
        <SiDiscord size={13} color="#fff" />
      </span>
    ),
    badge: <span className="bg-[#c9404c] text-white">9+</span>,
  },
  {
    name: "Chrome, perfil f",
    open: true,
    active: true,
    icon: <ChromeLogo />,
    badge: <span className="bg-[#5765b8] text-[#c7cdf0]">f</span>,
  },
  {
    name: "OBS",
    open: true,
    icon: (
      <span className="rounded-full bg-black">
        <SiObsstudio size={20} color="#c9c9c9" />
      </span>
    ),
    badge: <span className="bg-[#f00000]" />,
  },
  { name: "Calculadora", icon: <CalculatorLogo />, open: true },
];

function Taskbar() {
  return (
    <footer
      className={`${UI} grid h-10 shrink-0 grid-cols-[1fr_auto_1fr] items-center bg-linear-to-r from-[#241b3c] via-[#33202a] to-[#3a1416] text-[10px] leading-[13px] text-[#efe6e6]`}
    >
      <span />
      <div className="flex gap-[5px]">
        {APPS.map(({ name, icon, open, active, badge }) => (
          <button
            key={name}
            aria-label={name}
            className={`relative flex h-[34px] w-8 items-center justify-center rounded ${active ? "bg-white/10" : ""}`}
          >
            {icon}
            {badge && (
              <span className="absolute right-px top-[2px] flex *:flex *:h-3 *:min-w-3 *:items-center *:justify-center *:rounded-full *:text-[8px] *:font-semibold">
                {badge}
              </span>
            )}
            {open && (
              <span
                className={`absolute bottom-0 h-[3px] rounded-full ${active ? "w-3 bg-[#d59be0]" : "w-[5px] bg-[#a49a9e]"}`}
              />
            )}
          </button>
        ))}
      </div>
      <div className="flex items-center justify-end pr-[15px]">
        <IconButton label="Iconos ocultos" className="w-[26px]">
          <ChevronUp size={12} strokeWidth={2.5} />
        </IconButton>
        <IconButton label="Micrófono" className="w-[26px] text-[#c9a4c4]">
          <Mic size={14} strokeWidth={1.8} />
        </IconButton>
        <button className="w-9 text-center">
          ESP
          <br />
          LAA
        </button>
        <IconButton label="Red" className="ml-1 w-[22px]">
          <svg width="15" height="14" viewBox="0 0 15 14" fill="none" stroke="currentColor" strokeWidth="1.200" aria-hidden>
            <path d="M9 1H2Q1 1 1 2v7q0 1 1 1h9.500V6M3 13h7M5 10v3M8 10v3M11 1h3v4h-3zM12.500 5v6" />
          </svg>
        </IconButton>
        <IconButton label="Volumen" className="w-5">
          <Volume2 size={15} strokeWidth={1.6} />
        </IconButton>
        <time className="ml-[5px] w-[46px] whitespace-nowrap text-right">
          02:28:21
          <br />
          7/8/2026
        </time>
      </div>
    </footer>
  );
}

export default function App() {
  return (
    <div className="relative flex h-screen flex-col overflow-hidden bg-[#1f1f1f]">
      <main className="grid min-h-0 flex-1 grid-cols-2">
        <PaintWindow />
        <BrowserWindow />
      </main>
      <Taskbar />
      <ChatOverlay />
    </div>
  );
}
